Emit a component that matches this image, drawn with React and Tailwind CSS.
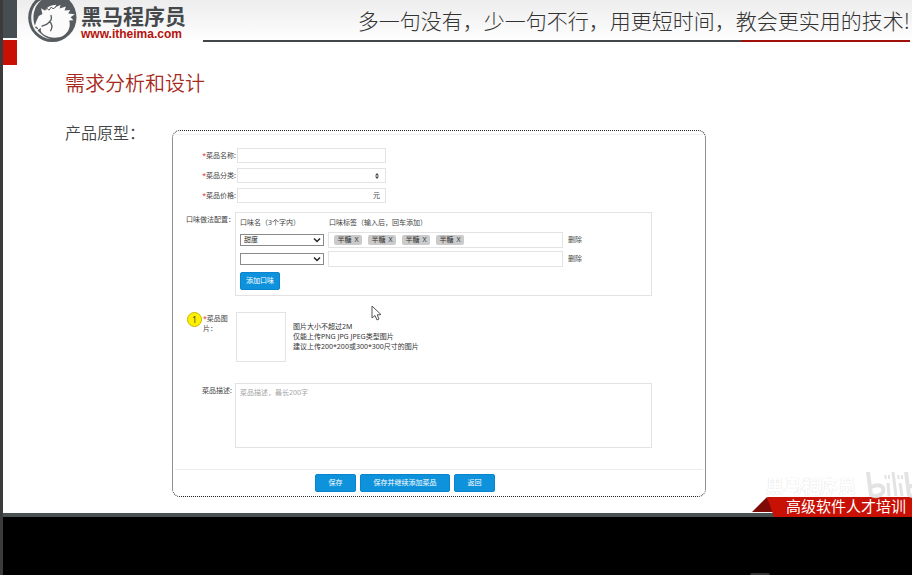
import React from "react";

const cjk = "font-['Noto_Sans','Noto_Sans_CJK_SC',sans-serif]";
const kai = "font-['Noto_Sans_CJK_SC',sans-serif]";

function HorseLogo() {
  return (
    <svg viewBox="20 0 150 130" className="h-[43px] w-[50px] shrink-0" aria-hidden="true">
      <ellipse cx="96" cy="53" rx="73" ry="74" fill="#555b5e" />
      <path d="M58 2 C28 22 24 68 48 97 C60 110 76 117 92 119 C62 108 41 88 39 58 C38 32 48 12 64 0 Z" fill="#f4f4f4" />
      <path
        d="M66 42 L62 25 L73 32 C80 20 92 15 108 14 L104 22 L121 15 L118 26 L137 20 L133 32 L150 30 L144 41 L164 43 L151 52 L160 61 L147 62 C153 81 143 100 129 108 C110 118 84 115 68 103 C60 97 60 90 62 84 L50 92 L42 82 L47 66 L55 48 Z"
        fill="#fbfbfb"
      />
      <path d="M75 31 L80 25 L86 31 L93 21 L98 27 L108 20" fill="none" stroke="#555b5e" strokeWidth="3" />
      <path d="M92 47 C96 58 91 63 82 71 C77 76 71 75 65 79 M88 65 C97 74 96 84 91 93 M46 82 L51 86" fill="none" stroke="#555b5e" strokeWidth="4" strokeLinecap="round" />
    </svg>
  );
}

function Chevron() {
  return (
    <svg viewBox="0 0 8 6" className="pointer-events-none col-start-1 row-start-1 mr-[3px] h-[6px] w-[8px] self-center justify-self-end" aria-hidden="true">
      <path d="M1 1.5 L4 4.5 L7 1.5" fill="none" stroke="#222" strokeWidth="1.5" />
    </svg>
  );
}

function FieldLabel({ htmlFor, text }) {
  return (
    <label htmlFor={htmlFor} className="w-16 shrink-0 pr-px text-right">
      <span className="text-[#e03030]">*</span>
      {text}:
    </label>
  );
}

function TasteSelect({ id, value }) {
  return (
    <span className="grid w-[84px] shrink-0">
      <select
        id={id}
        aria-label="口味名"
        defaultValue={value}
        className="col-start-1 row-start-1 h-3 appearance-none border border-[#8a8a8a] bg-white pl-[3px] text-[7px] leading-[10px] text-[#222]"
      >
        <option value={value}>{value}</option>
      </select>
      <Chevron />
    </span>
  );
}

function TasteRow({ id, value, tags }) {
  return (
    <div className="flex items-center">
      <TasteSelect id={id} value={value} />
      <div className="ml-1 flex h-4 min-w-0 flex-1 items-center gap-[6px] border border-[#e3e3e3] pl-[5px]">
        {tags.map((tag, i) => (
          <span key={i} className="flex h-[10px] w-7 shrink-0 items-center justify-center gap-[3px] rounded-[2px] bg-[#cbcbcb] text-[#333]">
            {tag}
            <button type="button">X</button>
          </span>
        ))}
        <input aria-label="口味标签" className="h-3 min-w-0 flex-1 outline-none" />
      </div>
      <button type="button" className="ml-[5px] w-[83px] shrink-0 text-left">
        删除
      </button>
    </div>
  );
}

function BlueButton({ children, className }) {
  return (
    <button type="button" className={`h-[18px] rounded-[2px] border border-[#0a85cd] bg-[#0e92dc] text-white ${className}`}>
      {children}
    </button>
  );
}

function DishForm() {
  return (
    <form
      onSubmit={(e) => e.preventDefault()}
      className="relative mt-[10px] max-w-[534px] flex-1 rounded-lg border border-dotted border-[#222] bg-white pt-[3px] text-[7px] leading-[10px] text-[#444]"
    >
      <div className="mx-[2px] border-t border-[#f0f0f0]" />
      <div className="mt-[13px] flex flex-col gap-[5px]">
        <div className="flex items-center">
          <FieldLabel htmlFor="dish-name" text="菜品名称" />
          <input id="dish-name" className="h-[15px] w-[149px] border border-[#e3e3e3] px-1" />
        </div>
        <div className="flex items-center">
          <FieldLabel htmlFor="dish-type" text="菜品分类" />
          <span className="grid w-[149px]">
            <select id="dish-type" className="col-start-1 row-start-1 h-[15px] appearance-none border border-[#e3e3e3] bg-white px-1">
              <option value=""></option>
            </select>
            <svg viewBox="0 0 4 6" className="pointer-events-none col-start-1 row-start-1 mr-[7px] h-[6px] w-1 self-center justify-self-end" aria-hidden="true">
              <path d="M0 2.5 L2 0 L4 2.5 Z M0 3.5 L2 6 L4 3.5 Z" fill="#444" />
            </svg>
          </span>
        </div>
        <div className="flex items-center">
          <FieldLabel htmlFor="dish-price" text="菜品价格" />
          <span className="flex h-[15px] w-[149px] items-center border border-[#e3e3e3] pr-[5px]">
            <input id="dish-price" className="h-3 min-w-0 flex-1 px-1 outline-none" />元
          </span>
        </div>
      </div>

      <div className="mt-[9px] mr-[53px] flex">
        <label htmlFor="taste-one" className="w-[62px] shrink-0 pt-[3px] text-right whitespace-nowrap">
          口味做法配置：
        </label>
        <div className="min-w-0 flex-1 border border-[#e3e3e3] pt-[5px] pb-[5px] pl-1">
          <div className="flex">
            <span className="w-[89px]">口味名（3个字内）</span>
            <span>口味标签（输入后，回车添加）</span>
          </div>
          <div className="mt-1 flex flex-col gap-[3px]">
            <TasteRow id="taste-one" value="甜度" tags={["半糖", "半糖", "半糖", "半糖"]} />
            <TasteRow id="taste-two" value="" tags={[]} />
          </div>
          <BlueButton className="mt-[5px] block w-10">添加口味</BlueButton>
        </div>
      </div>

      <div className="mt-4 flex">
        <span className="ml-[14px] flex h-[15px] w-[15px] shrink-0 items-center justify-center rounded-full border border-[#c9b800] bg-[#fdf000] text-[8px] text-[#333]">
          1
        </span>
        <label htmlFor="dish-image" className="w-[34px] shrink-0 pt-[2px] pl-px">
          <span className="text-[#e03030]">*</span>菜品图
          <br />
          片：
        </label>
        <button type="button" id="dish-image" aria-label="菜品图片" className="h-[50px] w-[50px] shrink-0 border border-[#e3e3e3]" />
        <p className="pt-[10px] pl-[7px] text-[#333]">
          图片大小不超过2M
          <br />
          仅能上传PNG JPG JPEG类型图片
          <br />
          建议上传200*200或300*300尺寸的图片
        </p>
      </div>

      <div className="mt-[21px] mr-[53px] flex">
        <label htmlFor="dish-desc" className="w-[62px] shrink-0 pt-[3px] pr-[3px] text-right">
          菜品描述:
        </label>
        <textarea
          id="dish-desc"
          placeholder="菜品描述，最长200字"
          className="h-[65px] min-w-0 flex-1 resize-none border border-[#e3e3e3] px-1 py-[4px] placeholder:text-[#a5a5a5]"
        />
      </div>

      <div className="mx-[2px] mt-[21px] flex gap-1 border-t border-[#ececec] pt-1 pb-1 pl-[140px]">
        <BlueButton className="w-[41px]">保存</BlueButton>
        <BlueButton className="w-[90px]">保存并继续添加菜品</BlueButton>
        <BlueButton className="w-[41px]">返回</BlueButton>
      </div>

      <svg viewBox="0 0 12 16" className="pointer-events-none absolute top-[174px] left-[198px] h-4 w-3" aria-hidden="true">
        <path d="M1 1 L1 13 L4 10.5 L6 15 L8 14 L6.2 9.8 L10 9.6 Z" fill="#fff" stroke="#555" strokeWidth="1" />
      </svg>
    </form>
  );
}

function Ribbon() {
  return (
    <div className="absolute right-0 bottom-0 h-[20px] w-[160px]">
      <svg viewBox="0 0 160 20" className="h-[20px] w-[160px]" aria-hidden="true">
        <path d="M0 15 L15 0 L22 15 Z" fill="#7d0a05" />
        <path d="M15 0 H160 V20 H22 Z" fill="#c81004" />
      </svg>
      <p className={`absolute top-0 left-[34px] text-[15px] leading-[18px] whitespace-nowrap text-white ${kai}`}>高级软件人才培训</p>
    </div>
  );
}

function Watermark() {
  return (
    <div className="pointer-events-none absolute right-0 bottom-[16px] flex h-[32px] w-[146px] items-start justify-between overflow-hidden">
      <span className={`pt-[6px] text-[18px] leading-[20px] font-bold whitespace-nowrap text-white [text-shadow:0_0_1px_#ccc] ${kai}`}>黑马程序员</span>
      <svg viewBox="0 0 47 32" className="h-[32px] w-[47px]" aria-hidden="true">
        <g fill="none" stroke="#dedede" strokeOpacity="0.85" strokeWidth="4">
          <path d="M3 3 L6 26 C12 29 20 25 18 19 C16 15 10 16 6 18" />
          <path d="M23 14 L24 27 M28 3 L31 27 M35 14 L37 27" strokeWidth="3" />
          <path d="M41 3 L44 26 C50 29 56 25 55 19 C53 15 48 16 44 18" />
          <path d="M20 6 L21 10 M24 6 L24 10 M33 6 L34 10 M37 6 L37 10" strokeWidth="2" />
        </g>
      </svg>
    </div>
  );
}

export default function App() {
  return (
    <div className={`flex min-h-screen overflow-hidden bg-black ${cjk}`}>
      <div className="w-[3px] shrink-0 bg-[#3b3b3b]" />
      <div className="flex min-w-0 flex-1 flex-col">
        <section className="relative border-b-4 border-[#4a5153] bg-white">
          <div className="flex bg-linear-to-b from-[#ededed] from-0% to-white to-[42px] pb-1">
            <div className="w-[14px] shrink-0">
              <div className="h-[38px] bg-[#474e51]" />
              <div className="mt-[2px] h-[25px] bg-[#c81004]" />
            </div>
            <header className="flex h-[43px] min-w-0 flex-1 pl-[10px]">
              <HorseLogo />
              <div className="w-[126px] shrink-0 pt-[5px] pl-1">
                <p className={`text-[21px] leading-[20px] font-bold whitespace-nowrap text-[#45494b] ${kai}`}>黑马程序员</p>
                <a href="#home" className="block font-['Liberation_Sans',sans-serif] text-[12px] leading-[18px] font-bold text-[#b5120b]">
                  www.itheima.com
                </a>
              </div>
              <div className="mr-[2px] flex h-[42px] min-w-0 flex-1 flex-col">
                <p className={`flex-1 pt-[5px] text-right text-[21px] leading-[30px] font-light whitespace-nowrap text-[#333] ${kai}`}>
                  多一句没有，少一句不行，用更短时间，教会更实用的技术!
                </p>
                <div className="flex h-[2px]">
                  <div className="flex-1 bg-[#3f474b]" />
                  <div className="w-[169px] bg-[#a01008]" />
                </div>
              </div>
            </header>
          </div>
          <h1 className={`pl-[62px] text-[20px] leading-[28px] font-[350] text-[#a52a1c] ${kai}`}>需求分析和设计</h1>
          <div className="flex pt-[23px] pr-4 pb-[16px] pl-[62px]">
            <h2 className={`w-[107px] shrink-0 text-[16px] leading-[24px] font-[350] text-[#444] ${kai}`}>产品原型：</h2>
            <DishForm />
          </div>
          <div className="absolute right-0 -bottom-1">
            <Ribbon />
            <Watermark />
          </div>
        </section>
        <div className="flex flex-1 items-end justify-end pr-[142px]">
          <div className="h-[2px] w-[20px] rounded-t-full bg-[#333]" />
        </div>
      </div>
    </div>
  );
}
